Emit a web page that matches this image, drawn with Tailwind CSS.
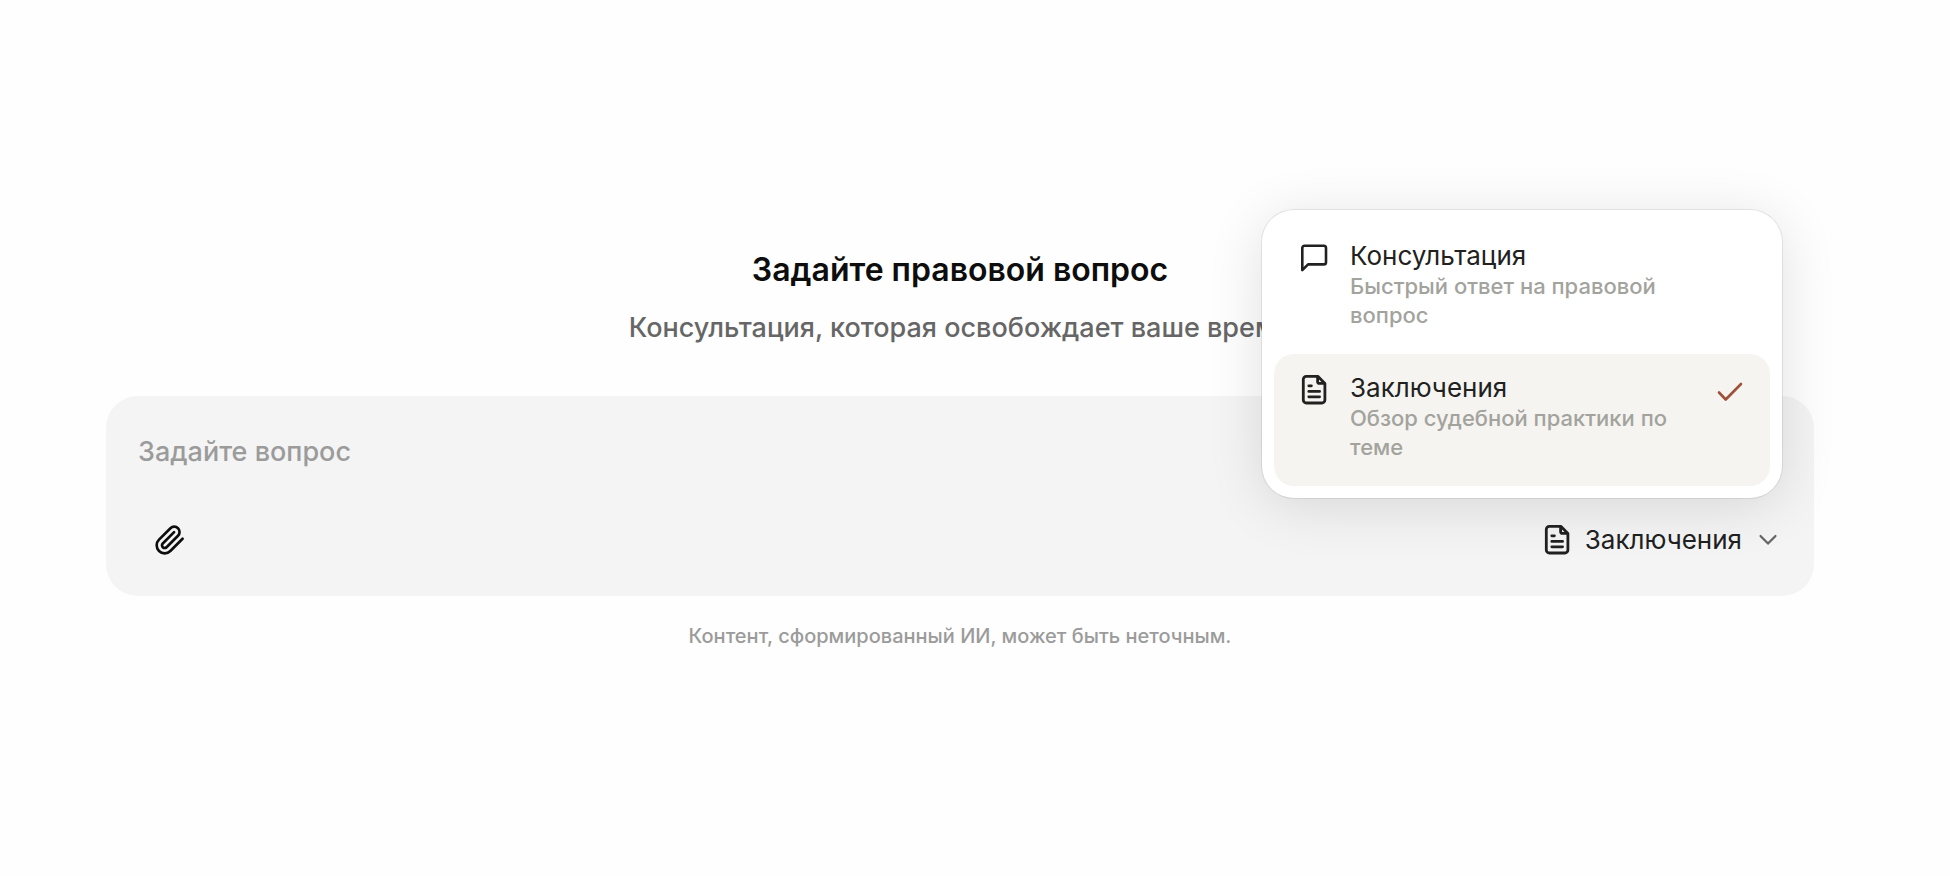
<!DOCTYPE html>
<html lang="ru">
<head>
  <meta charset="UTF-8" />
  <meta name="viewport" content="width=device-width, initial-scale=1.0"/>
  <title>Правовой вопрос</title>
  <script src="https://cdn.jsdelivr.net/npm/@tailwindcss/browser@4"></script>
</head>
<body class="bg-[#fefefe] font-['Inter','Liberation_Sans',sans-serif]">
  <main class="min-h-screen flex flex-col justify-center pl-[106px] pr-[136px]">

    <!-- Heading -->
    <div class="pt-6 text-center">
      <h1 class="text-[32px] leading-10 font-semibold text-[#0d0d0d]">Задайте правовой вопрос</h1>
      <p class="mt-5 text-[27px] leading-9 font-medium text-[#666666]">Консультация, которая освобождает ваше время</p>
    </div>

    <!-- Question form -->
    <form class="mt-[50px] rounded-[32px] bg-[#f4f4f4] px-8 py-6">
      <textarea aria-label="Вопрос" rows="1" placeholder="Задайте вопрос"
        class="block w-full h-[88px] py-3 resize-none outline-none text-[27px] leading-[40px] font-medium text-[#212121] placeholder:text-[#9b9b9b]"></textarea>

      <div class="flex items-center justify-between">
        <button type="button" aria-label="Прикрепить файл" class="flex size-16 items-center justify-center text-[#0d0d0d]">
          <svg class="size-8" viewBox="0 0 24 24" fill="none" stroke="currentColor" stroke-width="2" stroke-linecap="round" stroke-linejoin="round">
            <path d="m21.44 11.05-9.19 9.19a6 6 0 0 1-8.49-8.49l8.57-8.57A4 4 0 1 1 18 8.84l-8.59 8.57a2 2 0 0 1-2.83-2.83l8.49-8.48"/>
          </svg>
        </button>

        <!-- Mode picker -->
        <div class="relative">
          <button id="mode-button" type="button" aria-haspopup="listbox" aria-expanded="true"
            class="flex h-16 items-center text-[26px] leading-8 text-[#212121]">
            <svg class="mr-3 size-8" viewBox="0 0 32 32" fill="none" stroke="currentColor" stroke-width="2.8" stroke-linecap="round" stroke-linejoin="round">
              <path d="M19.8 2.3H8.3a3 3 0 0 0-3 3V26a3 3 0 0 0 3 3h15.6a3 3 0 0 0 3-3V9.4zM19.6 2.8v4.6a2 2 0 0 0 2 2h4.8M10.8 11.8h2.6M10.8 17.4h10.8M10.8 22.8h10.8"/>
            </svg>
            <span id="mode-label">Заключения</span>
            <svg class="ml-2 size-8" viewBox="0 0 32 32" fill="none" stroke="#666666" stroke-width="2.2" stroke-linecap="round" stroke-linejoin="round">
              <path d="m10.5 12 7.5 7.6 7.5-7.6"/>
            </svg>
          </button>

          <div id="mode-menu" role="listbox"
            class="absolute right-0 bottom-full mb-2.5 w-[520px] rounded-[32px] bg-white p-3 shadow-[0_0_0_1px_rgba(0,0,0,0.08),0_8px_56px_rgba(0,0,0,0.12)]">
            <button type="button" role="option" aria-selected="false"
              class="group flex w-full items-start gap-5 rounded-[20px] px-6 pt-[18px] pb-6 text-left aria-selected:bg-[#f5f4f0]">
              <svg class="mt-0.5 size-8 shrink-0 text-[#212121]" viewBox="0 0 32 32" fill="none" stroke="currentColor" stroke-width="2.6" stroke-linecap="round" stroke-linejoin="round">
                <path d="M4.3 28.2V5.9a2.2 2.2 0 0 1 2.2-2.2h19.3A2.2 2.2 0 0 1 28 5.9v14.3a2.2 2.2 0 0 1-2.2 2.2H10.1z"/>
              </svg>
              <span class="flex-1">
                <span data-title class="block text-[26px] leading-8 text-[#212121]">Консультация</span>
                <span class="block text-[22px] leading-[29px] font-medium text-[#a3a39e]">Быстрый ответ на правовой вопрос</span>
              </span>
              <svg class="invisible mt-1 size-8 shrink-0 group-aria-selected:visible" viewBox="0 0 32 32" fill="none" stroke="#9c5138" stroke-width="2.6" stroke-linecap="round" stroke-linejoin="round">
                <path d="m5 16.5 6.7 7L27 8"/>
              </svg>
            </button>

            <button type="button" role="option" aria-selected="true"
              class="group flex w-full items-start gap-5 rounded-[20px] px-6 pt-[18px] pb-6 text-left aria-selected:bg-[#f5f4f0]">
              <svg class="mt-0.5 size-8 shrink-0 text-[#212121]" viewBox="0 0 32 32" fill="none" stroke="currentColor" stroke-width="2.8" stroke-linecap="round" stroke-linejoin="round">
                <path d="M19.8 2.3H8.3a3 3 0 0 0-3 3V26a3 3 0 0 0 3 3h15.6a3 3 0 0 0 3-3V9.4zM19.6 2.8v4.6a2 2 0 0 0 2 2h4.8M10.8 11.8h2.6M10.8 17.4h10.8M10.8 22.8h10.8"/>
              </svg>
              <span class="flex-1">
                <span data-title class="block text-[26px] leading-8 text-[#212121]">Заключения</span>
                <span class="block text-[22px] leading-[29px] font-medium text-[#a3a39e]">Обзор судебной практики по теме</span>
              </span>
              <svg class="invisible mt-1 size-8 shrink-0 group-aria-selected:visible" viewBox="0 0 32 32" fill="none" stroke="#9c5138" stroke-width="2.6" stroke-linecap="round" stroke-linejoin="round">
                <path d="m5 16.5 6.7 7L27 8"/>
              </svg>
            </button>
          </div>
        </div>
      </div>
    </form>

    <p class="mt-[26px] text-center text-[20px] leading-7 font-medium text-[#9b9b9b]">Контент, сформированный ИИ, может быть неточным.</p>
  </main>

  <script>
    const modeButton = document.getElementById('mode-button');
    const modeLabel = document.getElementById('mode-label');
    const modeMenu = document.getElementById('mode-menu');
    const options = modeMenu.querySelectorAll('[role="option"]');

    // Open and close the menu
    modeButton.addEventListener('click', () => {
      modeMenu.hidden = !modeMenu.hidden;
      modeButton.setAttribute('aria-expanded', String(!modeMenu.hidden));
    });

    // Pick a mode
    options.forEach((option) => {
      option.addEventListener('click', () => {
        options.forEach((o) => o.setAttribute('aria-selected', String(o === option)));
        modeLabel.textContent = option.querySelector('[data-title]').textContent;
        modeMenu.hidden = true;
        modeButton.setAttribute('aria-expanded', 'false');
      });
    });
  </script>
</body>
</html>
